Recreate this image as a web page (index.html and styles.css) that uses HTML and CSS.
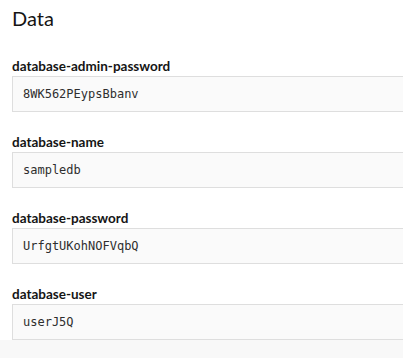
FILE: index.html
```html
<!DOCTYPE html>
<html lang="en">
<head>
    <meta charset="UTF-8">
    <meta name="viewport" content="width=device-width, initial-scale=1.0">
    <title>Secret data</title>
    <link rel="stylesheet" href="styles.css">
</head>
<body>
    <div class="page">
        <h2 class="section-title">Data</h2>

        <div class="field">
            <label class="field-label">database-admin-password</label>
            <div class="field-value">8WK562PEypsBbanv</div>
        </div>

        <div class="field">
            <label class="field-label">database-name</label>
            <div class="field-value">sampledb</div>
        </div>

        <div class="field">
            <label class="field-label">database-password</label>
            <div class="field-value">UrfgtUKohNOFVqbQ</div>
        </div>

        <div class="field">
            <label class="field-label">database-user</label>
            <div class="field-value">userJ5Q</div>
        </div>
    </div>
    <div class="footer"></div>
</body>
</html>
```

FILE: styles.css
```css
:root {
    --text-color: #151515;
    --field-bg: #fafafa;
    --field-border: #dedede;
    --footer-bg: #f8f8f8;
}

body {
    margin: 0;
    padding: 0;
    font-family: 'Lato', 'Open Sans', sans-serif;
    color: var(--text-color);
    background-color: #ffffff;
}

.page {
    padding: 0 0 0 12px;
    height: 340px;
    box-sizing: border-box;
}

.section-title {
    margin: 0;
    padding-top: 4px;
    font-size: 20px;
    font-weight: 400;
    line-height: 28px;
}

.field {
    display: flex;
    flex-direction: column;
    margin-top: 20px;
}

.field:first-of-type {
    margin-top: 24px;
}

.field-label {
    font-size: 13.5px;
    font-weight: 700;
    line-height: 20px;
}

.field-value {
    height: 36px;
    box-sizing: border-box;
    display: flex;
    align-items: center;
    padding-left: 10px;
    background-color: var(--field-bg);
    border: 1px solid var(--field-border);
    border-right: none;
    font-family: 'DejaVu Sans Mono', monospace;
    font-size: 12px;
    color: #2e2e2e;
}

.footer {
    height: 18px;
    background-color: var(--footer-bg);
}
```
